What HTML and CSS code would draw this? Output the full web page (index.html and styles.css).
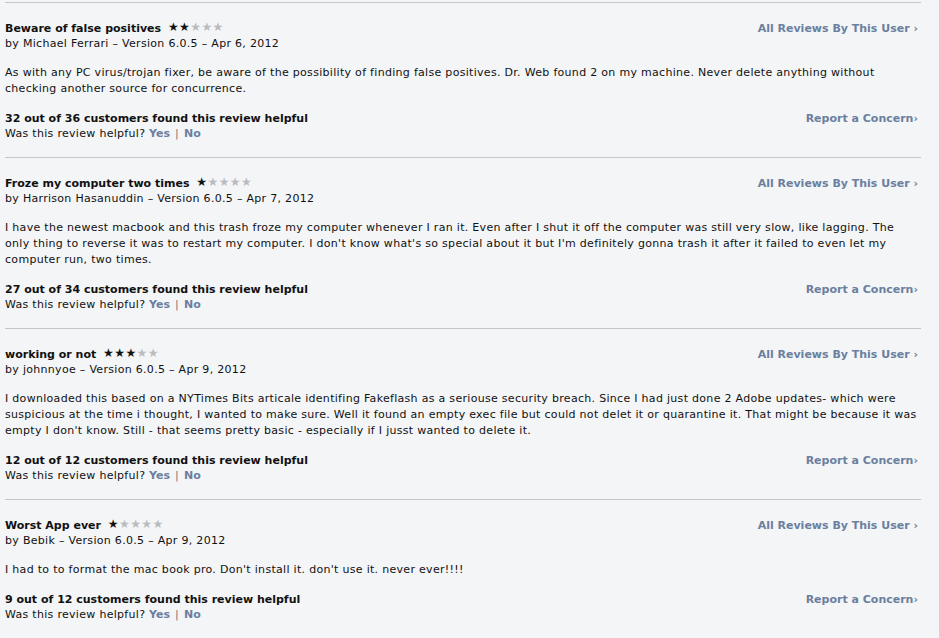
FILE: index.html
```html
<!DOCTYPE html>
<html>
<head>
<meta charset="utf-8">
<link rel="stylesheet" href="styles.css">
</head>
<body>
<div class="reviews">
  <div class="review">
    <div class="head">
      <div class="meta">
        <div class="title">Beware of false positives <span class="stars"><span class="on">★★</span><span class="off">★★★</span></span></div>
        <div class="by">by Michael Ferrari – Version 6.0.5 – Apr 6, 2012</div>
      </div>
      <a class="link">All Reviews By This User <span class="chev">›</span></a>
    </div>
    <p class="body">As with any PC virus/trojan fixer, be aware of the possibility of finding false positives. Dr. Web found 2 on my machine. Never delete anything without checking another source for concurrence.</p>
    <div class="foot">
      <div>
        <div class="helpful">32 out of 36 customers found this review helpful</div>
        <div class="ask">Was this review helpful? <a class="yn">Yes</a><span class="bar">|</span><a class="yn">No</a></div>
      </div>
      <a class="link">Report a Concern<span class="chev">›</span></a>
    </div>
  </div>

  <div class="review">
    <div class="head">
      <div class="meta">
        <div class="title">Froze my computer two times <span class="stars"><span class="on">★</span><span class="off">★★★★</span></span></div>
        <div class="by">by Harrison Hasanuddin – Version 6.0.5 – Apr 7, 2012</div>
      </div>
      <a class="link">All Reviews By This User <span class="chev">›</span></a>
    </div>
    <p class="body">I have the newest macbook and this trash froze my computer whenever I ran it. Even after I shut it off the computer was still very slow, like lagging. The only thing to reverse it was to restart my computer. I don't know what's so special about it but I'm definitely gonna trash it after it failed to even let my computer run, two times.</p>
    <div class="foot">
      <div>
        <div class="helpful">27 out of 34 customers found this review helpful</div>
        <div class="ask">Was this review helpful? <a class="yn">Yes</a><span class="bar">|</span><a class="yn">No</a></div>
      </div>
      <a class="link">Report a Concern<span class="chev">›</span></a>
    </div>
  </div>

  <div class="review">
    <div class="head">
      <div class="meta">
        <div class="title">working or not <span class="stars"><span class="on">★★★</span><span class="off">★★</span></span></div>
        <div class="by">by johnnyoe – Version 6.0.5 – Apr 9, 2012</div>
      </div>
      <a class="link">All Reviews By This User <span class="chev">›</span></a>
    </div>
    <p class="body">I downloaded this based on a NYTimes Bits articale identifing Fakeflash as a seriouse security breach. Since I had just done 2 Adobe updates- which were suspicious at the time i thought, I wanted to make sure. Well it found an empty exec file but could not delet it or quarantine it. That might be because it was empty I don't know. Still - that seems pretty basic - especially if I jusst wanted to delete it.</p>
    <div class="foot">
      <div>
        <div class="helpful">12 out of 12 customers found this review helpful</div>
        <div class="ask">Was this review helpful? <a class="yn">Yes</a><span class="bar">|</span><a class="yn">No</a></div>
      </div>
      <a class="link">Report a Concern<span class="chev">›</span></a>
    </div>
  </div>

  <div class="review">
    <div class="head">
      <div class="meta">
        <div class="title">Worst App ever <span class="stars"><span class="on">★</span><span class="off">★★★★</span></span></div>
        <div class="by">by Bebik – Version 6.0.5 – Apr 9, 2012</div>
      </div>
      <a class="link">All Reviews By This User <span class="chev">›</span></a>
    </div>
    <p class="body">I had to to format the mac book pro. Don't install it. don't use it. never ever!!!!</p>
    <div class="foot">
      <div>
        <div class="helpful">9 out of 12 customers found this review helpful</div>
        <div class="ask">Was this review helpful? <a class="yn">Yes</a><span class="bar">|</span><a class="yn">No</a></div>
      </div>
      <a class="link">Report a Concern<span class="chev">›</span></a>
    </div>
  </div>
</div>
</body>
</html>
```
FILE: styles.css
```css
html, body {
  margin: 0;
  padding: 0;
  background: #f4f5f7;
}
body {
  font-family: "DejaVu Sans", "Liberation Sans", sans-serif;
  font-size: 11px;
  color: #111;
  padding: 2px 18px 0 5px;
}
.reviews {
  width: 916px;
}
.review {
  border-top: 1px solid #c3c7cd;
  padding: 18px 0 16px 0;
}
.head, .foot {
  display: flex;
  justify-content: space-between;
  align-items: flex-start;
}
.title, .helpful {
  font-weight: bold;
  line-height: 15px;
}
.by, .ask, .body {
  letter-spacing: 0.3px;
}
.by, .ask {
  line-height: 15px;
}
.body {
  margin: 14px 0 14px 0;
  line-height: 16px;
}
.stars {
  font-size: 12px;
  letter-spacing: 0.4px;
  margin-left: 3px;
  position: relative;
  top: -1px;
}
.stars .on { color: #111; }
.stars .off { color: #b9bbbe; }
.link {
  color: #6b7f9f;
  font-weight: bold;
  line-height: 15px;
  margin-right: 3px;
}
.chev {
  font-weight: bold;
}
.yn {
  color: #6b7f9f;
  font-weight: bold;
  letter-spacing: 0;
}
.bar {
  color: #777;
  margin: 0 5px 0 5px;
}
```
